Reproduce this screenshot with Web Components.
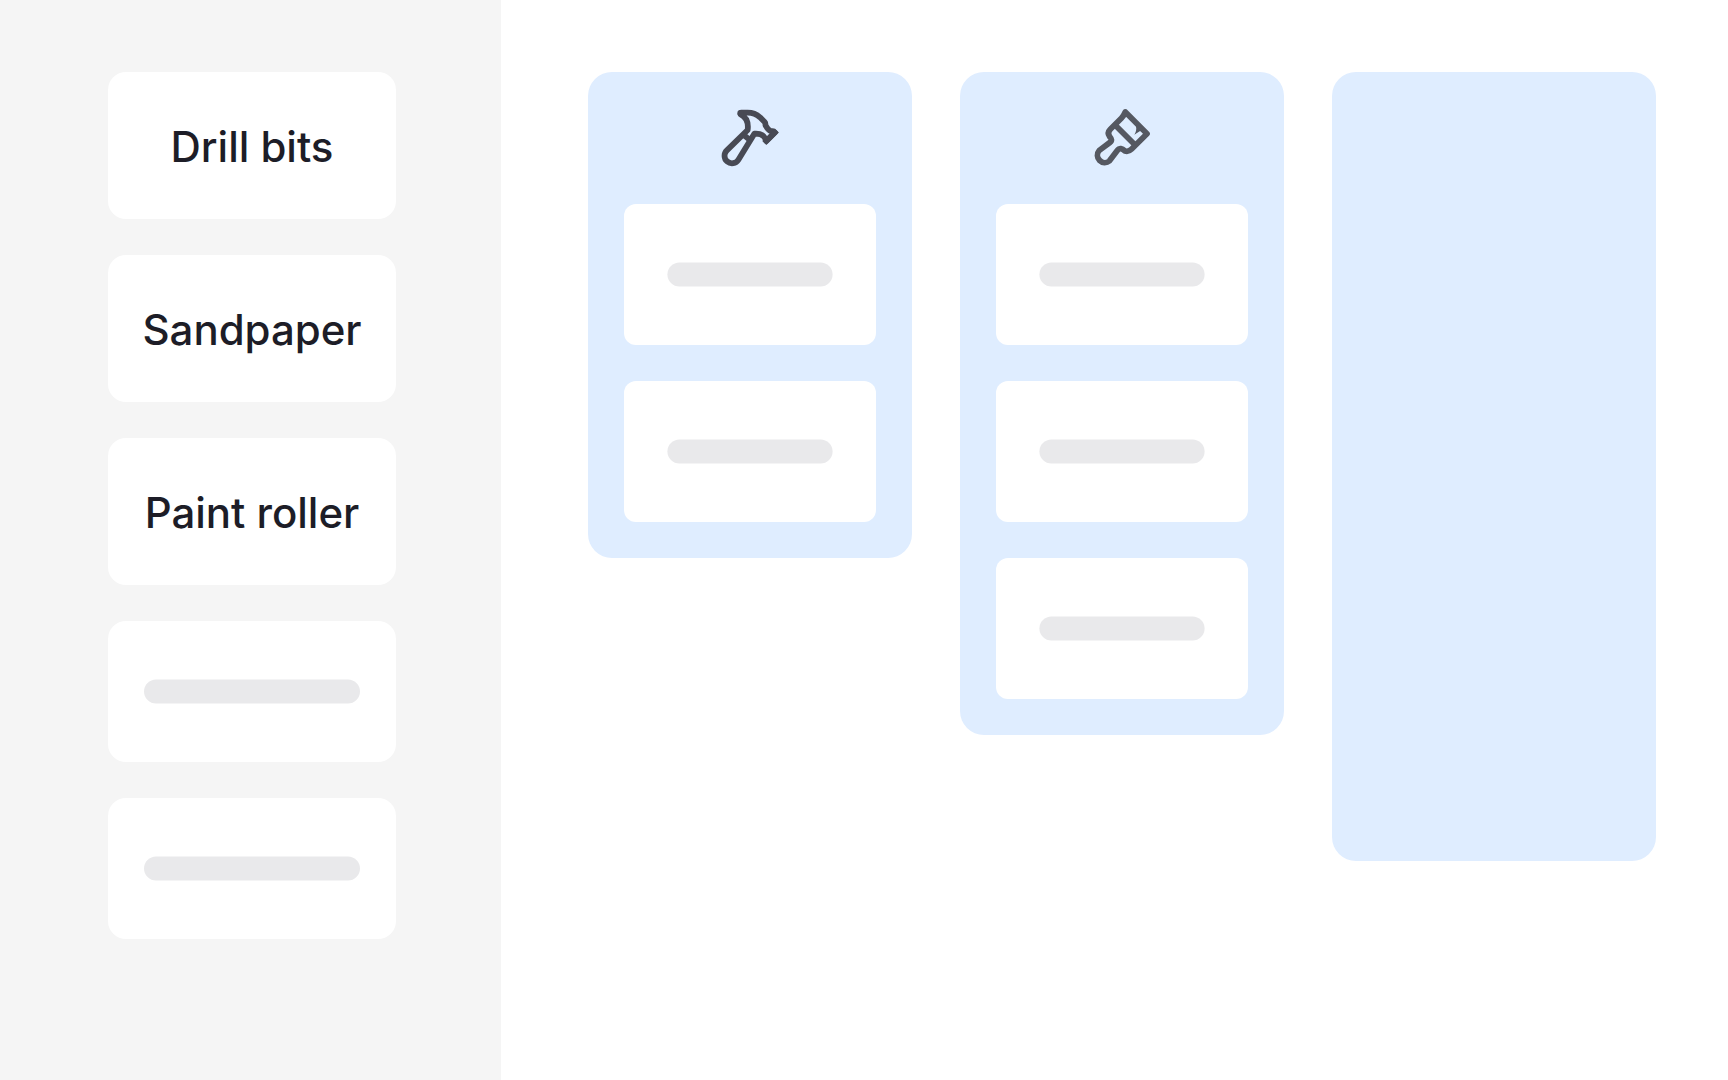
<!DOCTYPE html>
<html lang="en">
<head>
<meta charset="utf-8">
<title>Sort into groups</title>
<style>
  body {
    margin: 0;
    background: #fff;
    font-family: Inter, "Liberation Sans", sans-serif;
    color: #1d1d27;
  }
</style>
</head>
<body>
<sort-board>
  <item-card slot="items">Drill bits</item-card>
  <item-card slot="items">Sandpaper</item-card>
  <item-card slot="items">Paint roller</item-card>
  <item-card slot="items" placeholder></item-card>
  <item-card slot="items" placeholder></item-card>

  <group-column>
    <tool-icon slot="icon" name="hammer"></tool-icon>
    <item-card placeholder small></item-card>
    <item-card placeholder small></item-card>
  </group-column>
  <group-column>
    <tool-icon slot="icon" name="brush"></tool-icon>
    <item-card placeholder small></item-card>
    <item-card placeholder small></item-card>
    <item-card placeholder small></item-card>
  </group-column>
  <group-column empty></group-column>
</sort-board>

<script>
class SortBoard extends HTMLElement {
  connectedCallback() {
    this.attachShadow({ mode: 'open' });
    this.shadowRoot.innerHTML = `
      <style>
        :host {
          display: flex;
          height: 1080px;
          overflow: hidden;
        }
        aside {
          box-sizing: border-box;
          flex: none;
          width: 501px;
          padding: 72px 105px 0 108px;
          background: #f5f5f5;
          display: flex;
          flex-direction: column;
          gap: 36px;
        }
        main {
          flex: 1;
          display: flex;
          align-items: flex-start;
          gap: 48px;
          padding: 72px 72px 0 87px;
        }
      </style>
      <aside><slot name="items"></slot></aside>
      <main><slot></slot></main>
    `;
  }
}

class ItemCard extends HTMLElement {
  connectedCallback() {
    this.attachShadow({ mode: 'open' });
    let content = '<slot></slot>';
    if (this.hasAttribute('placeholder')) {
      // svg keeps the bar centred on the half pixel
      const width = this.hasAttribute('small') ? 165.2 : 216;
      content = `<svg width="216" height="141"><rect x="${(216 - width) / 2}" y="58.4" width="${width}" height="24.2" rx="12.1"/></svg>`;
    }
    this.shadowRoot.innerHTML = `
      <style>
        :host {
          box-sizing: border-box;
          display: flex;
          align-items: center;
          justify-content: center;
          height: 147px;
          padding-top: 2px;
          border-radius: 18px;
          background: #fff;
          font-size: 42px;
          font-weight: 500;
          letter-spacing: -0.03px;
          line-height: 60px;
          white-space: nowrap;
        }
        :host([placeholder]) {
          height: 141px;
          padding: 0;
        }
        :host([small]) {
          border-radius: 12px;
        }
        svg {
          display: block;
          fill: #e9e9eb;
        }
      </style>
      ${content}
    `;
  }
}

class GroupColumn extends HTMLElement {
  connectedCallback() {
    this.attachShadow({ mode: 'open' });
    this.shadowRoot.innerHTML = `
      <style>
        :host {
          box-sizing: border-box;
          flex: none;
          display: flex;
          flex-direction: column;
          gap: 36px;
          width: 324px;
          padding: 30px 36px 36px;
          border-radius: 24px;
          background: #dfedff;
        }
        :host([empty]) {
          height: 789px;
        }
        header {
          display: flex;
          justify-content: center;
          margin-bottom: -6px;
        }
      </style>
      <header><slot name="icon"></slot></header>
      <slot></slot>
    `;
  }
}

const ICONS = {
  hammer: {
    color: '#484a54',
    body: `
      <path d="M123 53 L143 53 C158 53 170 58 180 67 L194 81 C198 85 195 88 197 92 C201 99 205 106 212 108 C218 108 221 109 224.5 112.5 L199 138 C197 133 196 129 192 125 C184 116 175 115 163 116 L115.2 194.2 A22.5 22.5 0 1 1 80.6 166 L143 105 C146 82 138 66 122 58 Z"/>
      <circle cx="121.5" cy="54.5" r="9.5" fill="currentColor" stroke="none"/>
      <path d="M224.5 112.5 L199 138" stroke-linecap="square"/>
      <path d="M131 120 L149 134"/>`
  },
  brush: {
    color: '#555861',
    body: `
      <path d="M160 51 L225 116 L179 162 C173 168 165 170 159 168 C150 160 142 158 137 165 L112.5 197.5 A22 22 0 0 1 81.5 166.5 L113 143 C121 137 119 132 113 125 C107 117 109 109 115 103 L148 70 C154 64 157 58 160 51 Z"/>
      <path d="M130 91 L187 148"/>
      <path d="M192 93 L206 93 L213 107 L203 109 L187 119 C192 111 194 104 192 93 Z" fill="currentColor" stroke="none"/>`
  }
};

class ToolIcon extends HTMLElement {
  connectedCallback() {
    const icon = ICONS[this.getAttribute('name')];
    this.attachShadow({ mode: 'open' });
    this.shadowRoot.innerHTML = `
      <style>
        :host {
          display: block;
          width: 72px;
          height: 72px;
          color: ${icon.color};
        }
        svg {
          display: block;
          width: 100%;
          height: 100%;
        }
      </style>
      <svg viewBox="42 21 216 216" fill="none" stroke="currentColor" stroke-width="17.3" stroke-linejoin="round">
        ${icon.body}
      </svg>
    `;
  }
}

customElements.define('sort-board', SortBoard);
customElements.define('item-card', ItemCard);
customElements.define('group-column', GroupColumn);
customElements.define('tool-icon', ToolIcon);
</script>
</body>
</html>
